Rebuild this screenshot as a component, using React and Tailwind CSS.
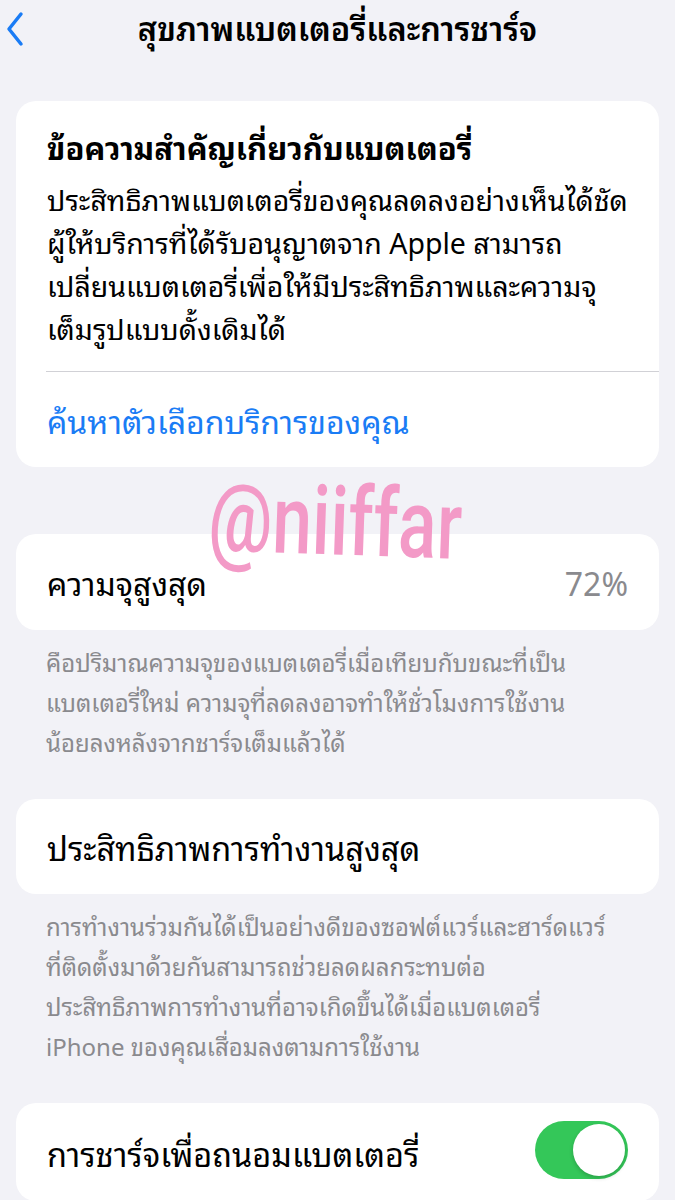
import React from "react";

const Card = ({ children, className = "" }) => (
  <div className={`mx-4 bg-white rounded-[20px] ${className}`}>{children}</div>
);

const Footer = ({ lines }) => (
  <p className="px-[46px] pt-[11px] text-[24px] leading-[40px] text-[#8a8a8e] whitespace-nowrap">
    {lines.map((l, i) => (
      <span key={i} className="block">
        {l}
      </span>
    ))}
  </p>
);

const Toggle = () => (
  <div className="w-[93px] h-[58px] rounded-full bg-[#34c759] flex items-center justify-end p-[3px] -mt-[4px]">
    <div className="w-[52px] h-[52px] rounded-full bg-white shadow-[0_2px_4px_rgba(0,0,0,0.2)]" />
  </div>
);

export default function App() {
  return (
    <div className="w-[675px] h-[1200px] overflow-hidden bg-[#f2f2f7] text-black font-['Noto_Sans_Thai_Looped','Noto_Sans_Thai',sans-serif]">
      {/* Nav bar */}
      <div className="relative flex items-start justify-center h-[56px]">
        <svg
          className="absolute left-[5px] top-[11px]"
          width="20"
          height="36"
          viewBox="0 0 20 36"
          fill="none"
        >
          <path
            d="M16 3 L4 18 L16 33"
            stroke="#1a7cf5"
            strokeWidth="3.5"
            strokeLinecap="round"
            strokeLinejoin="round"
          />
        </svg>
        <h1 className="pt-[4px] text-[32.5px] leading-[44px] font-semibold">
          สุขภาพแบตเตอรี่และการชาร์จ
        </h1>
      </div>

      {/* Important message */}
      <Card className="mt-[45px]">
        <div className="px-[31px] pt-[23px] pb-[22px] whitespace-nowrap">
          <h2 className="text-[31px] font-bold leading-[44px]">
            ข้อความสำคัญเกี่ยวกับแบตเตอรี่
          </h2>
          <p className="mt-[9px] text-[28.5px] leading-[43px]">
            <span className="block">ประสิทธิภาพแบตเตอรี่ของคุณลดลงอย่างเห็นได้ชัด</span>
            <span className="block">ผู้ให้บริการที่ได้รับอนุญาตจาก Apple สามารถ</span>
            <span className="block">เปลี่ยนแบตเตอรี่เพื่อให้มีประสิทธิภาพและความจุ</span>
            <span className="block">เต็มรูปแบบดั้งเดิมได้</span>
          </p>
        </div>
        <div className="ml-[30px] border-t border-[#d1d1d6]" />
        <div className="px-[31px] h-[95px] flex items-center text-[32px] text-[#1a7cf5]">
          ค้นหาตัวเลือกบริการของคุณ
        </div>
      </Card>

      {/* Watermark */}
      <div className="relative h-0 z-10">
        <span className="absolute left-[209px] top-[2px] origin-left scale-x-[0.74] rotate-[2deg] text-[96px] leading-none font-medium text-[#f39ac7] font-['Roboto',sans-serif]">
          @niiffar
        </span>
      </div>

      {/* Maximum capacity */}
      <Card className="mt-[67px]">
        <div className="h-[96px] px-[31px] flex items-center justify-between text-[32px]">
          <span>ความจุสูงสุด</span>
          <span className="text-[#8a8a8e]">72%</span>
        </div>
      </Card>
      <Footer
        lines={[
          "คือปริมาณความจุของแบตเตอรี่เมื่อเทียบกับขณะที่เป็น",
          "แบตเตอรี่ใหม่ ความจุที่ลดลงอาจทำให้ชั่วโมงการใช้งาน",
          "น้อยลงหลังจากชาร์จเต็มแล้วได้",
        ]}
      />

      {/* Peak performance */}
      <Card className="mt-[38px]">
        <div className="h-[95px] px-[31px] flex items-center text-[32.5px]">
          ประสิทธิภาพการทำงานสูงสุด
        </div>
      </Card>
      <Footer
        lines={[
          "การทำงานร่วมกันได้เป็นอย่างดีของซอฟต์แวร์และฮาร์ดแวร์",
          "ที่ติดตั้งมาด้วยกันสามารถช่วยลดผลกระทบต่อ",
          "ประสิทธิภาพการทำงานที่อาจเกิดขึ้นได้เมื่อแบตเตอรี่",
          "iPhone ของคุณเสื่อมลงตามการใช้งาน",
        ]}
      />

      {/* Optimized charging */}
      <Card className="mt-[38px]">
        <div className="h-[98px] px-[31px] flex items-center justify-between text-[32.5px]">
          <span>การชาร์จเพื่อถนอมแบตเตอรี่</span>
          <Toggle />
        </div>
      </Card>
    </div>
  );
}
